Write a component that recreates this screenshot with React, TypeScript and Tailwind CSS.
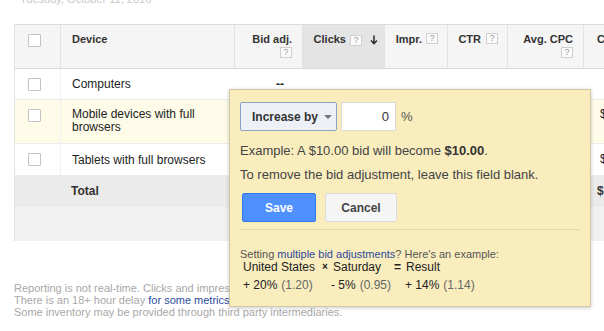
import React from 'react'

const cols = 'grid grid-cols-[46px_174px_68px_82px_63px_60px_76px_60px]'

const Checkbox = () => (
    <span className="block w-[13px] h-[13px] border border-[#c4c4c4] bg-white rounded-[1px]"></span>
)

const Help = () => (
    <span className="inline-flex items-center justify-center w-[12px] h-[11px] border border-[#cfcfcf] bg-[#fbfbfb] text-[9px] leading-none font-normal text-[#9a9a9a]">?</span>
)

const SortArrow = () => (
    <svg width="8" height="10" viewBox="0 0 8 10" className="mt-[2px]">
        <path d="M4 0.5v8M1 5.5l3 3 3-3" fill="none" stroke="#333" strokeWidth="1.6" />
    </svg>
)

const Factor = ({ pct, val }: { pct: string; val: string }) => (
    <div className="flex gap-[4px]">
        <span>{pct}</span>
        <span className="text-[#666]">{val}</span>
    </div>
)

const App = () => {
    return (
        <div className="relative w-[604px] h-[331px] overflow-hidden bg-white font-['Liberation_Sans',Arial,sans-serif] text-[#222]">
            {/* date, mostly scrolled off */}
            <div className="h-[24px] overflow-hidden">
                <div className="pl-[20px] -mt-[6px] text-[11px] leading-[11px] text-[#c9c9c9] whitespace-nowrap">Tuesday, October 11, 2016</div>
            </div>

            <div className="ml-[14px] w-[630px] border-l border-[#e2e2e2]">
                {/* header */}
                <div className={`${cols} h-[45px] bg-[#f5f5f5] border-y border-[#dadada] text-[11px] font-bold text-[#333] leading-[13px]`}>
                    <div className="border-r border-[#e2e2e2] pl-[13px] pt-[9px]"><Checkbox /></div>
                    <div className="border-r border-[#e2e2e2] pl-[11px] pt-[8px]">Device</div>
                    <div className="border-r border-[#e2e2e2] pr-[10px] pt-[8px] flex flex-col items-end gap-[1px]">
                        <span>Bid adj.</span><Help />
                    </div>
                    <div className="border-r border-[#e2e2e2] bg-[#e4e4e4] pr-[6px] pt-[8px] flex justify-end items-start">
                        <span>Clicks</span><span className="ml-[4px]"><Help /></span><span className="ml-[8px]"><SortArrow /></span>
                    </div>
                    <div className="border-r border-[#e2e2e2] pr-[9px] pt-[8px] flex justify-end items-start gap-[4px]">
                        <span>Impr.</span><Help />
                    </div>
                    <div className="border-r border-[#e2e2e2] pr-[9px] pt-[8px] flex justify-end items-start gap-[5px]">
                        <span>CTR</span><Help />
                    </div>
                    <div className="border-r border-[#e2e2e2] pr-[10px] pt-[8px] flex flex-col items-end gap-[1px]">
                        <span>Avg. CPC</span><Help />
                    </div>
                    <div className="pl-[13px] pt-[8px] whitespace-nowrap">Cost</div>
                </div>

                {/* rows */}
                <div className={`${cols} h-[31px] border-b border-[#ececec] text-[12px] leading-[13px] items-center`}>
                    <div className="h-full flex items-center border-r border-[#f0f0f0] pl-[13px]"><Checkbox /></div>
                    <div className="pl-[11px]">Computers</div>
                    <div className="text-right pr-[19px] font-bold">--</div>
                    <div></div><div></div><div></div><div></div>
                    <div></div>
                </div>

                <div className={`${cols} h-[44px] border-b border-[#ececec] bg-[#fefce9] text-[12px] leading-[13px]`}>
                    <div className="border-r border-[#f0f0f0] pl-[13px] pt-[9px]"><Checkbox /></div>
                    <div className="pl-[11px] pr-[20px] pt-[8px]">Mobile devices with full browsers</div>
                    <div></div><div></div><div></div><div></div><div></div>
                    <div className="pl-[16px] pt-[8px] whitespace-nowrap">$18.40</div>
                </div>

                <div className={`${cols} h-[32px] border-b border-[#ececec] text-[12px] leading-[13px] items-center`}>
                    <div className="h-full flex items-center border-r border-[#f0f0f0] pl-[13px]"><Checkbox /></div>
                    <div className="pl-[11px] pt-[1px]">Tablets with full browsers</div>
                    <div></div><div></div><div></div><div></div><div></div>
                    <div className="pl-[16px] whitespace-nowrap">$6.71</div>
                </div>

                <div className={`${cols} h-[31px] bg-[#ebebeb] text-[12px] leading-[13px] font-bold text-[#333] items-center`}>
                    <div></div>
                    <div className="pl-[10px]">Total</div>
                    <div></div><div></div><div></div><div></div><div></div>
                    <div className="pl-[13px] whitespace-nowrap">$25.11</div>
                </div>

                <div className="h-[34px] bg-[#f1f1f1]"></div>
            </div>

            {/* footnotes */}
            <div className="mt-[41px] pl-[14px] text-[11px] leading-[12px] text-[#a8a8a8] whitespace-nowrap">
                <div>Reporting is not real-time. Clicks and impressions received in the last three hours may not be included here.</div>
                <div>There is an 18+ hour delay <span className="text-[#2b4a9c]">for some metrics</span>.</div>
                <div>Some inventory may be provided through third party intermediaries.</div>
            </div>

            {/* bid adjustment popup */}
            <div className="absolute left-[229px] top-[89px] w-[362px] h-[218px] bg-[#f9edbe] border border-[#d2c9a4] shadow-[0_1px_4px_rgba(0,0,0,0.2)] px-[10px] pt-[12px] text-[#444]">
                <div className="flex items-center">
                    <div className="w-[97px] h-[29px] flex items-center pl-[11px] border border-[#8aa3c7] bg-[#edf1f7] rounded-[2px] text-[12px] font-bold text-[#333]">
                        Increase by
                        <span className="ml-[6px] mt-[1px] border-x-[4px] border-x-transparent border-t-[4px] border-t-[#777]"></span>
                    </div>
                    <div className="ml-[4px] w-[55px] h-[29px] bg-white border border-[#d9d9d9] flex items-center justify-end pr-[6px] text-[13px] text-[#333]">0</div>
                    <span className="ml-[5px] text-[13px] text-[#555]">%</span>
                </div>
                <div className="mt-[12px] text-[13px] leading-[16px]">Example: A $10.00 bid will become <b className="text-[#333]">$10.00</b>.</div>
                <div className="mt-[8px] text-[13px] leading-[16px]">To remove the bid adjustment, leave this field blank.</div>
                <div className="mt-[10px] flex">
                    <div className="ml-[2px] w-[74px] h-[29px] flex items-center justify-center bg-[#4d90fe] border border-[#3079ed] rounded-[2px] text-[12px] font-bold text-white">Save</div>
                    <div className="ml-[9px] w-[72px] h-[29px] flex items-center justify-center bg-[#f5f5f5] border border-[#dcdcdc] rounded-[2px] text-[12px] font-bold text-[#444]">Cancel</div>
                </div>
                <div className="mt-[7px] border-t border-[#e3d6a4]"></div>
                <div className="mt-[18px] text-[11px] leading-[13px] text-[#555]">
                    Setting <span className="text-[#2b4a9c]">multiple bid adjustments</span>? Here's an example:
                </div>
                <div className="-mt-[2px] grid grid-cols-[79px_9px_63px_11px_auto] gap-y-[2px] pl-[3px] text-[12px] leading-[16px] text-[#222]">
                    <span>United States</span>
                    <span className="font-bold text-[10px]">×</span>
                    <span className="pl-[2px]">Saturday</span>
                    <span className="font-bold">=</span>
                    <span className="pl-[1px]">Result</span>
                    <Factor pct="+ 20%" val="(1.20)" />
                    <span></span>
                    <Factor pct="- 5%" val="(0.95)" />
                    <span></span>
                    <Factor pct="+ 14%" val="(1.14)" />
                </div>
            </div>
        </div>
    )
}

export default App
